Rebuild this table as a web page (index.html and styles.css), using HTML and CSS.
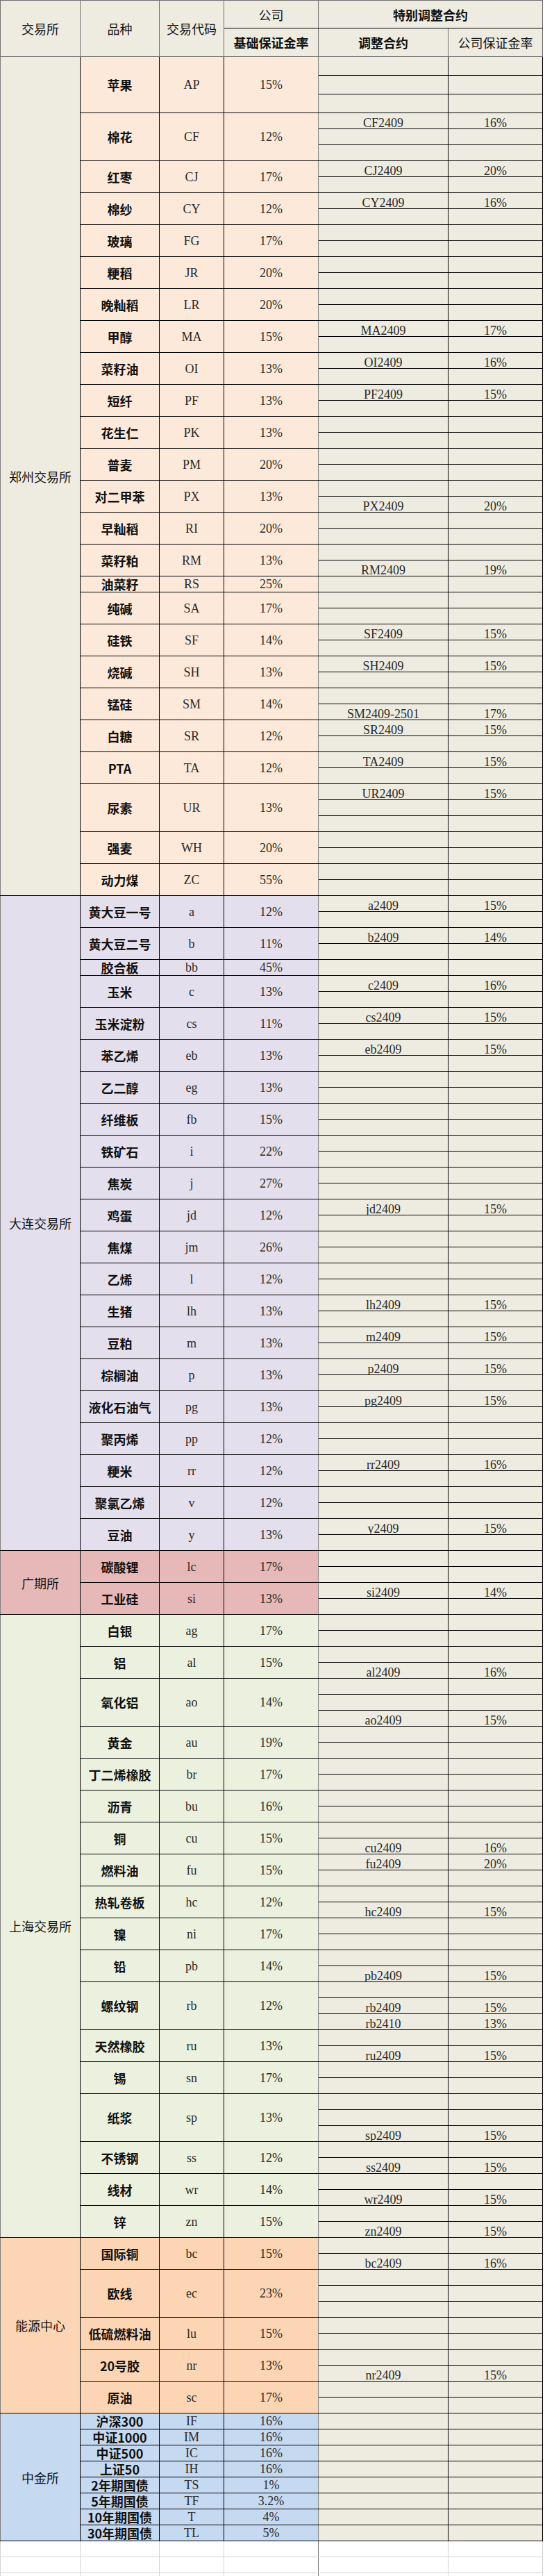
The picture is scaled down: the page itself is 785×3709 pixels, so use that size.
FILE: index.html
```html
<!DOCTYPE html>
<html lang="zh-CN">
<head>
<meta charset="utf-8">
<title>保证金率表</title>
<link rel="stylesheet" href="styles.css">
</head>
<body>
<table class="sheet">
<colgroup><col class="w1"><col class="w2"><col class="w3"><col class="w4"><col class="w5"><col class="w6"></colgroup>
<thead>
<tr class="h1"><th rowspan="2">交易所</th><th rowspan="2">品种</th><th rowspan="2">交易代码</th><th class="top">公司</th><th colspan="2" class="top b">特别调整合约</th></tr>
<tr class="h2"><th class="b">基础保证金率</th><th class="b">调整合约</th><th>公司保证金率</th></tr>
</thead>

<tbody class="data zz">
<tr class="a"><td class="g" rowspan="52">郑州交易所</td><td class="p" rowspan="3">苹果</td><td class="c" rowspan="3">AP</td><td class="r" rowspan="3">15%</td><td></td><td></td></tr>
<tr class="a"><td></td><td></td></tr>
<tr class="a"><td></td><td></td></tr>
<tr><td class="p" rowspan="3">棉花</td><td class="c" rowspan="3">CF</td><td class="r" rowspan="3">12%</td><td>CF2409</td><td>16%</td></tr>
<tr><td></td><td></td></tr>
<tr><td></td><td></td></tr>
<tr><td class="p" rowspan="2">红枣</td><td class="c" rowspan="2">CJ</td><td class="r" rowspan="2">17%</td><td>CJ2409</td><td>20%</td></tr>
<tr><td></td><td></td></tr>
<tr><td class="p" rowspan="2">棉纱</td><td class="c" rowspan="2">CY</td><td class="r" rowspan="2">12%</td><td>CY2409</td><td>16%</td></tr>
<tr><td></td><td></td></tr>
<tr><td class="p" rowspan="2">玻璃</td><td class="c" rowspan="2">FG</td><td class="r" rowspan="2">17%</td><td></td><td></td></tr>
<tr><td></td><td></td></tr>
<tr><td class="p" rowspan="2">粳稻</td><td class="c" rowspan="2">JR</td><td class="r" rowspan="2">20%</td><td></td><td></td></tr>
<tr><td></td><td></td></tr>
<tr><td class="p" rowspan="2">晚籼稻</td><td class="c" rowspan="2">LR</td><td class="r" rowspan="2">20%</td><td></td><td></td></tr>
<tr><td></td><td></td></tr>
<tr><td class="p" rowspan="2">甲醇</td><td class="c" rowspan="2">MA</td><td class="r" rowspan="2">15%</td><td>MA2409</td><td>17%</td></tr>
<tr><td></td><td></td></tr>
<tr><td class="p" rowspan="2">菜籽油</td><td class="c" rowspan="2">OI</td><td class="r" rowspan="2">13%</td><td>OI2409</td><td>16%</td></tr>
<tr><td></td><td></td></tr>
<tr><td class="p" rowspan="2">短纤</td><td class="c" rowspan="2">PF</td><td class="r" rowspan="2">13%</td><td>PF2409</td><td>15%</td></tr>
<tr><td></td><td></td></tr>
<tr><td class="p" rowspan="2">花生仁</td><td class="c" rowspan="2">PK</td><td class="r" rowspan="2">13%</td><td></td><td></td></tr>
<tr><td></td><td></td></tr>
<tr><td class="p" rowspan="2">普麦</td><td class="c" rowspan="2">PM</td><td class="r" rowspan="2">20%</td><td></td><td></td></tr>
<tr><td></td><td></td></tr>
<tr><td class="p" rowspan="2">对二甲苯</td><td class="c" rowspan="2">PX</td><td class="r" rowspan="2">13%</td><td></td><td></td></tr>
<tr><td>PX2409</td><td>20%</td></tr>
<tr><td class="p" rowspan="2">早籼稻</td><td class="c" rowspan="2">RI</td><td class="r" rowspan="2">20%</td><td></td><td></td></tr>
<tr><td></td><td></td></tr>
<tr><td class="p" rowspan="2">菜籽粕</td><td class="c" rowspan="2">RM</td><td class="r" rowspan="2">13%</td><td></td><td></td></tr>
<tr><td>RM2409</td><td>19%</td></tr>
<tr><td class="p">油菜籽</td><td class="c">RS</td><td class="r">25%</td><td></td><td></td></tr>
<tr><td class="p" rowspan="2">纯碱</td><td class="c" rowspan="2">SA</td><td class="r" rowspan="2">17%</td><td></td><td></td></tr>
<tr><td></td><td></td></tr>
<tr><td class="p" rowspan="2">硅铁</td><td class="c" rowspan="2">SF</td><td class="r" rowspan="2">14%</td><td>SF2409</td><td>15%</td></tr>
<tr><td></td><td></td></tr>
<tr><td class="p" rowspan="2">烧碱</td><td class="c" rowspan="2">SH</td><td class="r" rowspan="2">13%</td><td>SH2409</td><td>15%</td></tr>
<tr><td></td><td></td></tr>
<tr><td class="p" rowspan="2">锰硅</td><td class="c" rowspan="2">SM</td><td class="r" rowspan="2">14%</td><td></td><td></td></tr>
<tr><td>SM2409-2501</td><td>17%</td></tr>
<tr><td class="p" rowspan="2">白糖</td><td class="c" rowspan="2">SR</td><td class="r" rowspan="2">12%</td><td>SR2409</td><td>15%</td></tr>
<tr><td></td><td></td></tr>
<tr><td class="p" rowspan="2">PTA</td><td class="c" rowspan="2">TA</td><td class="r" rowspan="2">12%</td><td>TA2409</td><td>15%</td></tr>
<tr><td></td><td></td></tr>
<tr><td class="p" rowspan="3">尿素</td><td class="c" rowspan="3">UR</td><td class="r" rowspan="3">13%</td><td>UR2409</td><td>15%</td></tr>
<tr><td></td><td></td></tr>
<tr><td></td><td></td></tr>
<tr><td class="p" rowspan="2">强麦</td><td class="c" rowspan="2">WH</td><td class="r" rowspan="2">20%</td><td></td><td></td></tr>
<tr><td></td><td></td></tr>
<tr><td class="p" rowspan="2">动力煤</td><td class="c" rowspan="2">ZC</td><td class="r" rowspan="2">55%</td><td></td><td></td></tr>
<tr><td></td><td></td></tr>
</tbody>

<tbody class="data dl">
<tr><td class="g" rowspan="41">大连交易所</td><td class="p" rowspan="2">黄大豆一号</td><td class="c" rowspan="2">a</td><td class="r" rowspan="2">12%</td><td>a2409</td><td>15%</td></tr>
<tr><td></td><td></td></tr>
<tr><td class="p" rowspan="2">黄大豆二号</td><td class="c" rowspan="2">b</td><td class="r" rowspan="2">11%</td><td>b2409</td><td>14%</td></tr>
<tr><td></td><td></td></tr>
<tr><td class="p">胶合板</td><td class="c">bb</td><td class="r">45%</td><td></td><td></td></tr>
<tr><td class="p" rowspan="2">玉米</td><td class="c" rowspan="2">c</td><td class="r" rowspan="2">13%</td><td>c2409</td><td>16%</td></tr>
<tr><td></td><td></td></tr>
<tr><td class="p" rowspan="2">玉米淀粉</td><td class="c" rowspan="2">cs</td><td class="r" rowspan="2">11%</td><td>cs2409</td><td>15%</td></tr>
<tr><td></td><td></td></tr>
<tr><td class="p" rowspan="2">苯乙烯</td><td class="c" rowspan="2">eb</td><td class="r" rowspan="2">13%</td><td>eb2409</td><td>15%</td></tr>
<tr><td></td><td></td></tr>
<tr><td class="p" rowspan="2">乙二醇</td><td class="c" rowspan="2">eg</td><td class="r" rowspan="2">13%</td><td></td><td></td></tr>
<tr><td></td><td></td></tr>
<tr><td class="p" rowspan="2">纤维板</td><td class="c" rowspan="2">fb</td><td class="r" rowspan="2">15%</td><td></td><td></td></tr>
<tr><td></td><td></td></tr>
<tr><td class="p" rowspan="2">铁矿石</td><td class="c" rowspan="2">i</td><td class="r" rowspan="2">22%</td><td></td><td></td></tr>
<tr><td></td><td></td></tr>
<tr><td class="p" rowspan="2">焦炭</td><td class="c" rowspan="2">j</td><td class="r" rowspan="2">27%</td><td></td><td></td></tr>
<tr><td></td><td></td></tr>
<tr><td class="p" rowspan="2">鸡蛋</td><td class="c" rowspan="2">jd</td><td class="r" rowspan="2">12%</td><td>jd2409</td><td>15%</td></tr>
<tr><td></td><td></td></tr>
<tr><td class="p" rowspan="2">焦煤</td><td class="c" rowspan="2">jm</td><td class="r" rowspan="2">26%</td><td></td><td></td></tr>
<tr><td></td><td></td></tr>
<tr><td class="p" rowspan="2">乙烯</td><td class="c" rowspan="2">l</td><td class="r" rowspan="2">12%</td><td></td><td></td></tr>
<tr><td></td><td></td></tr>
<tr><td class="p" rowspan="2">生猪</td><td class="c" rowspan="2">lh</td><td class="r" rowspan="2">13%</td><td>lh2409</td><td>15%</td></tr>
<tr><td></td><td></td></tr>
<tr><td class="p" rowspan="2">豆粕</td><td class="c" rowspan="2">m</td><td class="r" rowspan="2">13%</td><td>m2409</td><td>15%</td></tr>
<tr><td></td><td></td></tr>
<tr><td class="p" rowspan="2">棕榈油</td><td class="c" rowspan="2">p</td><td class="r" rowspan="2">13%</td><td>p2409</td><td>15%</td></tr>
<tr><td></td><td></td></tr>
<tr><td class="p" rowspan="2">液化石油气</td><td class="c" rowspan="2">pg</td><td class="r" rowspan="2">13%</td><td>pg2409</td><td>15%</td></tr>
<tr><td></td><td></td></tr>
<tr><td class="p" rowspan="2">聚丙烯</td><td class="c" rowspan="2">pp</td><td class="r" rowspan="2">12%</td><td></td><td></td></tr>
<tr><td></td><td></td></tr>
<tr><td class="p" rowspan="2">粳米</td><td class="c" rowspan="2">rr</td><td class="r" rowspan="2">12%</td><td>rr2409</td><td>16%</td></tr>
<tr><td></td><td></td></tr>
<tr><td class="p" rowspan="2">聚氯乙烯</td><td class="c" rowspan="2">v</td><td class="r" rowspan="2">12%</td><td></td><td></td></tr>
<tr><td></td><td></td></tr>
<tr><td class="p" rowspan="2">豆油</td><td class="c" rowspan="2">y</td><td class="r" rowspan="2">13%</td><td>y2409</td><td>15%</td></tr>
<tr><td></td><td></td></tr>
</tbody>

<tbody class="data gz">
<tr><td class="g" rowspan="4">广期所</td><td class="p" rowspan="2">碳酸锂</td><td class="c" rowspan="2">lc</td><td class="r" rowspan="2">17%</td><td></td><td></td></tr>
<tr><td></td><td></td></tr>
<tr><td class="p" rowspan="2">工业硅</td><td class="c" rowspan="2">si</td><td class="r" rowspan="2">13%</td><td>si2409</td><td>14%</td></tr>
<tr><td></td><td></td></tr>
</tbody>

<tbody class="data sh">
<tr><td class="g" rowspan="39">上海交易所</td><td class="p" rowspan="2">白银</td><td class="c" rowspan="2">ag</td><td class="r" rowspan="2">17%</td><td></td><td></td></tr>
<tr><td></td><td></td></tr>
<tr><td class="p" rowspan="2">铝</td><td class="c" rowspan="2">al</td><td class="r" rowspan="2">15%</td><td></td><td></td></tr>
<tr><td>al2409</td><td>16%</td></tr>
<tr><td class="p" rowspan="3">氧化铝</td><td class="c" rowspan="3">ao</td><td class="r" rowspan="3">14%</td><td></td><td></td></tr>
<tr><td></td><td></td></tr>
<tr><td>ao2409</td><td>15%</td></tr>
<tr><td class="p" rowspan="2">黄金</td><td class="c" rowspan="2">au</td><td class="r" rowspan="2">19%</td><td></td><td></td></tr>
<tr><td></td><td></td></tr>
<tr><td class="p" rowspan="2">丁二烯橡胶</td><td class="c" rowspan="2">br</td><td class="r" rowspan="2">17%</td><td></td><td></td></tr>
<tr><td></td><td></td></tr>
<tr><td class="p" rowspan="2">沥青</td><td class="c" rowspan="2">bu</td><td class="r" rowspan="2">16%</td><td></td><td></td></tr>
<tr><td></td><td></td></tr>
<tr><td class="p" rowspan="2">铜</td><td class="c" rowspan="2">cu</td><td class="r" rowspan="2">15%</td><td></td><td></td></tr>
<tr><td>cu2409</td><td>16%</td></tr>
<tr><td class="p" rowspan="2">燃料油</td><td class="c" rowspan="2">fu</td><td class="r" rowspan="2">15%</td><td>fu2409</td><td>20%</td></tr>
<tr><td></td><td></td></tr>
<tr><td class="p" rowspan="2">热轧卷板</td><td class="c" rowspan="2">hc</td><td class="r" rowspan="2">12%</td><td></td><td></td></tr>
<tr><td>hc2409</td><td>15%</td></tr>
<tr><td class="p" rowspan="2">镍</td><td class="c" rowspan="2">ni</td><td class="r" rowspan="2">17%</td><td></td><td></td></tr>
<tr><td></td><td></td></tr>
<tr><td class="p" rowspan="2">铅</td><td class="c" rowspan="2">pb</td><td class="r" rowspan="2">14%</td><td></td><td></td></tr>
<tr><td>pb2409</td><td>15%</td></tr>
<tr><td class="p" rowspan="3">螺纹钢</td><td class="c" rowspan="3">rb</td><td class="r" rowspan="3">12%</td><td></td><td></td></tr>
<tr><td>rb2409</td><td>15%</td></tr>
<tr><td>rb2410</td><td>13%</td></tr>
<tr><td class="p" rowspan="2">天然橡胶</td><td class="c" rowspan="2">ru</td><td class="r" rowspan="2">13%</td><td></td><td></td></tr>
<tr><td>ru2409</td><td>15%</td></tr>
<tr><td class="p" rowspan="2">锡</td><td class="c" rowspan="2">sn</td><td class="r" rowspan="2">17%</td><td></td><td></td></tr>
<tr><td></td><td></td></tr>
<tr><td class="p" rowspan="3">纸浆</td><td class="c" rowspan="3">sp</td><td class="r" rowspan="3">13%</td><td></td><td></td></tr>
<tr><td></td><td></td></tr>
<tr><td>sp2409</td><td>15%</td></tr>
<tr><td class="p" rowspan="2">不锈钢</td><td class="c" rowspan="2">ss</td><td class="r" rowspan="2">12%</td><td></td><td></td></tr>
<tr><td>ss2409</td><td>15%</td></tr>
<tr><td class="p" rowspan="2">线材</td><td class="c" rowspan="2">wr</td><td class="r" rowspan="2">14%</td><td></td><td></td></tr>
<tr><td>wr2409</td><td>15%</td></tr>
<tr><td class="p" rowspan="2">锌</td><td class="c" rowspan="2">zn</td><td class="r" rowspan="2">15%</td><td></td><td></td></tr>
<tr><td>zn2409</td><td>15%</td></tr>
</tbody>

<tbody class="data ine">
<tr><td class="g" rowspan="11">能源中心</td><td class="p" rowspan="2">国际铜</td><td class="c" rowspan="2">bc</td><td class="r" rowspan="2">15%</td><td></td><td></td></tr>
<tr><td>bc2409</td><td>16%</td></tr>
<tr><td class="p" rowspan="3">欧线</td><td class="c" rowspan="3">ec</td><td class="r" rowspan="3">23%</td><td></td><td></td></tr>
<tr><td></td><td></td></tr>
<tr><td></td><td></td></tr>
<tr><td class="p" rowspan="2">低硫燃料油</td><td class="c" rowspan="2">lu</td><td class="r" rowspan="2">15%</td><td></td><td></td></tr>
<tr><td></td><td></td></tr>
<tr><td class="p" rowspan="2">20号胶</td><td class="c" rowspan="2">nr</td><td class="r" rowspan="2">13%</td><td></td><td></td></tr>
<tr><td>nr2409</td><td>15%</td></tr>
<tr><td class="p" rowspan="2">原油</td><td class="c" rowspan="2">sc</td><td class="r" rowspan="2">17%</td><td></td><td></td></tr>
<tr><td></td><td></td></tr>
</tbody>

<tbody class="data cf">
<tr><td class="g" rowspan="8">中金所</td><td class="p">沪深300</td><td class="c">IF</td><td class="r">16%</td><td></td><td></td></tr>
<tr><td class="p">中证1000</td><td class="c">IM</td><td class="r">16%</td><td></td><td></td></tr>
<tr><td class="p">中证500</td><td class="c">IC</td><td class="r">16%</td><td></td><td></td></tr>
<tr><td class="p">上证50</td><td class="c">IH</td><td class="r">16%</td><td></td><td></td></tr>
<tr><td class="p">2年期国债</td><td class="c">TS</td><td class="r">1%</td><td></td><td></td></tr>
<tr><td class="p">5年期国债</td><td class="c">TF</td><td class="r">3.2%</td><td></td><td></td></tr>
<tr><td class="p">10年期国债</td><td class="c">T</td><td class="r">4%</td><td></td><td></td></tr>
<tr><td class="p">30年期国债</td><td class="c">TL</td><td class="r">5%</td><td></td><td></td></tr>
</tbody>

<tbody class="blank">
<tr><td></td><td></td><td></td><td class="r"></td><td></td><td></td></tr>
<tr><td></td><td></td><td></td><td class="r"></td><td></td><td></td></tr>
<tr><td></td><td></td><td></td><td class="r"></td><td></td><td></td></tr>
</tbody>
</table>
</body>
</html>
```

FILE: styles.css
```css
html {
  overflow: hidden;
  background: #ffffff;
}

body {
  margin: 0;
  font-family: "Noto Sans CJK SC", "Liberation Serif", sans-serif;
  color: #000;
}

.sheet {
  border-collapse: collapse;
  table-layout: fixed;
  font-size: 18px;
}

.w1 { width: 115px; }
.w2 { width: 114px; }
.w3 { width: 93px; }
.w4 { width: 136px; }
.w5 { width: 187px; }
.w6 { width: 136px; }

.sheet th,
.sheet td {
  padding: 0;
  text-align: center;
  vertical-align: middle;
  white-space: nowrap;
  overflow: hidden;
  line-height: 20px;
}

/* header */
.sheet thead tr.h1 { height: 40px; }
.sheet thead tr.h2 { height: 41px; }

.sheet th {
  background: #eeece1;
  border: 1px solid #6f6f6f;
  font-weight: normal;
  color: #111;
}

.sheet th.top { border-bottom-color: #000; }
.sheet th.b { font-weight: 700; }

/* data rows */
.data tr { height: 23px; }
.data tr.a { height: 27px; }

.data td {
  border: 1px solid #000;
}

.zz td { background: #fde9d9; }
.zz td.g { background: #eeece1; }
.dl td { background: #e4dfec; }
.gz td { background: #e6b8b7; }
.sh td { background: #ebf1de; }
.ine td { background: #fcd5b4; }
.cf td { background: #c5d9f1; }

.data td.g {
  border-left-color: #7f7f7f;
  font-weight: normal;
  color: #111;
}

.data td.p {
  font-weight: 700;
  color: #111;
}

.data td.c,
.data td.r {
  font-family: "Liberation Serif", serif;
  color: #2a2a2a;
}

.data td.r { border-right-color: #7f7f7f; }

/* special adjustment columns */
.data td:nth-last-child(-n+2) {
  background: #eeece1;
  font-family: "Liberation Serif", serif;
  color: #2a2a2a;
  vertical-align: bottom;
  line-height: 16px;
}

.data td:nth-last-child(2) { border-left-color: #7f7f7f; }

/* empty spreadsheet rows below */
.blank tr { height: 23px; }

.blank td {
  background: #ffffff;
  border: 1px solid #d4d4d4;
}

.blank td.r { border-right-color: #6f6f6f; }
```
